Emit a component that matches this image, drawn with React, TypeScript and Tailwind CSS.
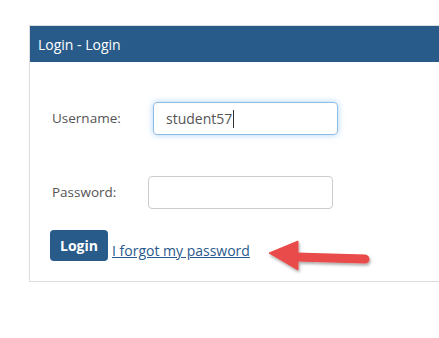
const LoginArrow = () => (
  <svg
    className="absolute left-[262px] top-[236px]"
    width="116"
    height="42"
    viewBox="0 0 116 42"
  >
    <defs>
      <filter id="arrowShadow" x="-20%" y="-40%" width="140%" height="180%">
        <feDropShadow dx="1" dy="2" stdDeviation="1.6" floodColor="#000" floodOpacity="0.35" />
      </filter>
    </defs>
    <g filter="url(#arrowShadow)" fill="#e84b48" stroke="#e84b48">
      {/* shaft */}
      <line x1="34" y1="21" x2="103" y2="23" strokeWidth="9" strokeLinecap="round" />
      {/* head */}
      <polygon points="7,17 36,5 36,34" strokeWidth="1" strokeLinejoin="round" />
    </g>
  </svg>
)

const App = () => {
  return (
    <div className="relative h-[338px] w-[439px] overflow-hidden bg-white font-['Open_Sans',sans-serif] text-[#555]">
      <div className="pl-[29px] pt-[25px]">
        <div className="w-[440px] border border-[#dddddd]">
          {/* HEADER */}
          <div className="flex h-[36px] items-center bg-[#285b8a] pl-[8px] text-[14px] text-white">
            Login - Login
          </div>

          <div className="pb-[20px] pl-[20px] pt-[40px]">
            {/* USERNAME */}
            <div className="flex items-center">
              <span className="w-[103px] pl-[2px] text-[13.5px]">Username:</span>
              <div className="flex h-[33px] w-[185px] items-center rounded-[4px] border border-[#8fbde6] px-[12px] text-[14px] shadow-[0_0_6px_rgba(102,175,233,0.55)]">
                student57
                <span className="ml-[1px] h-[18px] w-px bg-[#333]" />
              </div>
            </div>

            {/* PASSWORD */}
            <div className="mt-[41px] flex items-center">
              <span className="w-[98px] pl-[2px] text-[13.5px]">Password:</span>
              <div className="h-[33px] w-[185px] rounded-[4px] border border-[#cccccc]" />
            </div>

            {/* BOTAO */}
            <div className="mt-[21px] flex items-end gap-[4px]">
              <button className="h-[31px] w-[58px] rounded-[4px] bg-[#285b8a] text-[14px] font-bold text-white">
                Login
              </button>
              <a href="#" className="text-[14px] leading-[20px] text-[#2a5a8c] underline">
                I forgot my password
              </a>
            </div>
          </div>
        </div>
      </div>

      <LoginArrow />
    </div>
  )
}

export default App
